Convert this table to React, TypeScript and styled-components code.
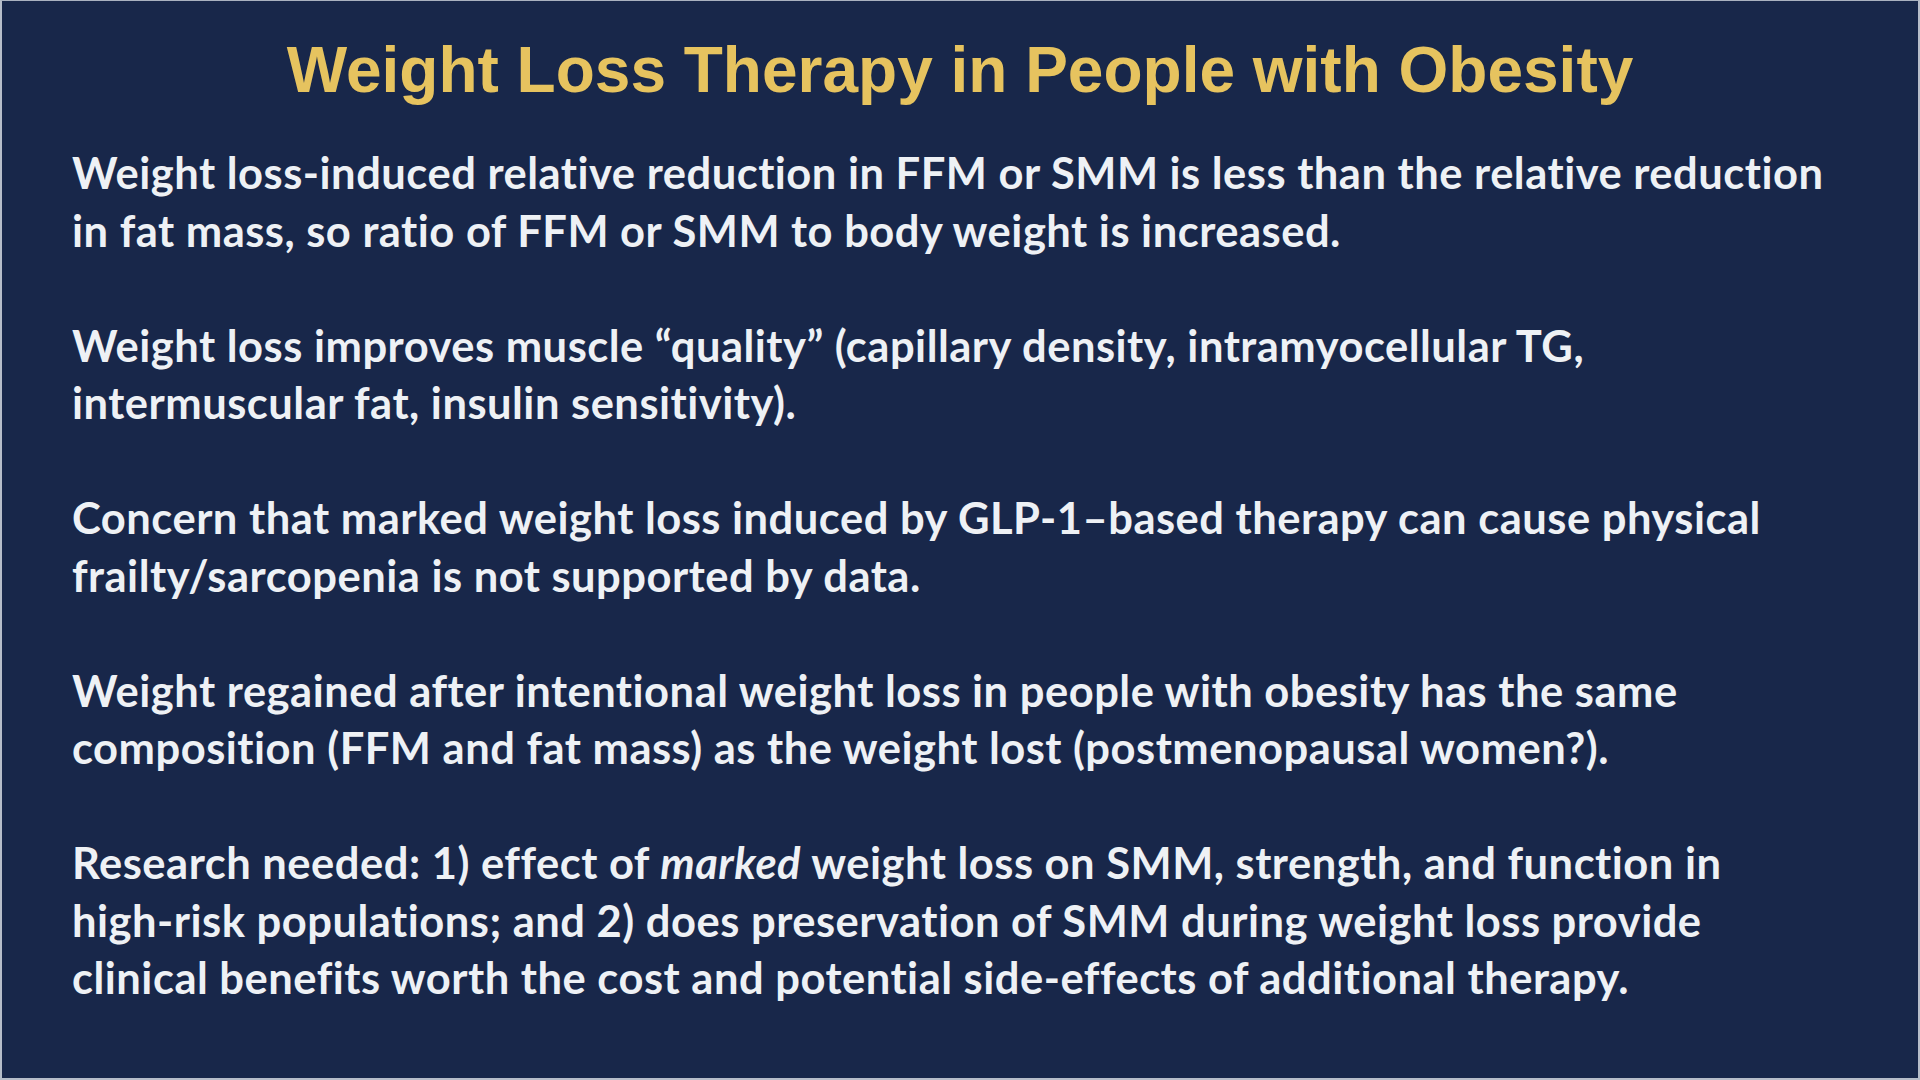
import type { ReactNode } from 'react';
import styled, { createGlobalStyle } from 'styled-components';

const GlobalStyle = createGlobalStyle`
  html, body {
    margin: 0;
    padding: 0;
    background: #c9ced8;
  }
`;

const Slide = styled.main`
  width: 1920px;
  height: 1080px;
  box-sizing: border-box;
  background: #18274a;
  border-top: 1px solid #aab2c0;
  border-left: 2px solid #b6bdc9;
  border-right: 2px solid #b6bdc9;
  border-bottom: 2px solid #b6bdc9;
  padding: 32px 0 0 70px;
  display: flex;
  flex-direction: column;
  overflow: hidden;
`;

const Title = styled.h1`
  margin: 0 0 37px -70px;
  font-family: 'Liberation Sans', Arial, sans-serif;
  font-weight: 700;
  font-size: 64px;
  line-height: 74px;
  color: #e6c35f;
  text-align: center;
`;

const Body = styled.section`
  display: flex;
  flex-direction: column;
  gap: 57.5px;
  font-family: Lato, 'Open Sans', sans-serif;
  font-weight: 700;
  font-size: 43.5px;
  letter-spacing: 0.5px;
  line-height: 57.5px;
  font-variant-ligatures: none;
  color: #eef1f5;
`;

const Paragraph = styled.p`
  margin: 0;
  white-space: nowrap;
`;

const Line = styled.span`
  display: block;
`;

const Em = styled.em`
  font-style: italic;
  font-weight: 700;
`;

const paragraphs: ReactNode[][] = [
  [
    'Weight loss-induced relative reduction in FFM or SMM is less than the relative reduction',
    'in fat mass, so ratio of FFM or SMM to body weight is increased.',
  ],
  [
    'Weight loss improves muscle \u201cquality\u201d (capillary density, intramyocellular TG,',
    'intermuscular fat, insulin sensitivity).',
  ],
  [
    'Concern that marked weight loss induced by GLP-1\u2013based therapy can cause physical',
    'frailty/sarcopenia is not supported by data.',
  ],
  [
    'Weight regained after intentional weight loss in people with obesity has the same',
    'composition (FFM and fat mass) as the weight lost (postmenopausal women?).',
  ],
  [
    <>
      Research needed: 1) effect of <Em>marked</Em> weight loss on SMM, strength, and function in
    </>,
    'high-risk populations; and 2) does preservation of SMM during weight loss provide',
    'clinical benefits worth the cost and potential side-effects of additional therapy.',
  ],
];

const App = () => {
  return (
    <>
      <GlobalStyle />
      <Slide>
        <Title>Weight Loss Therapy in People with Obesity</Title>
        <Body>
          {paragraphs.map((lines, i) => (
            <Paragraph key={i}>
              {lines.map((line, j) => (
                <Line key={j}>{line}</Line>
              ))}
            </Paragraph>
          ))}
        </Body>
      </Slide>
    </>
  );
};

export default App;
